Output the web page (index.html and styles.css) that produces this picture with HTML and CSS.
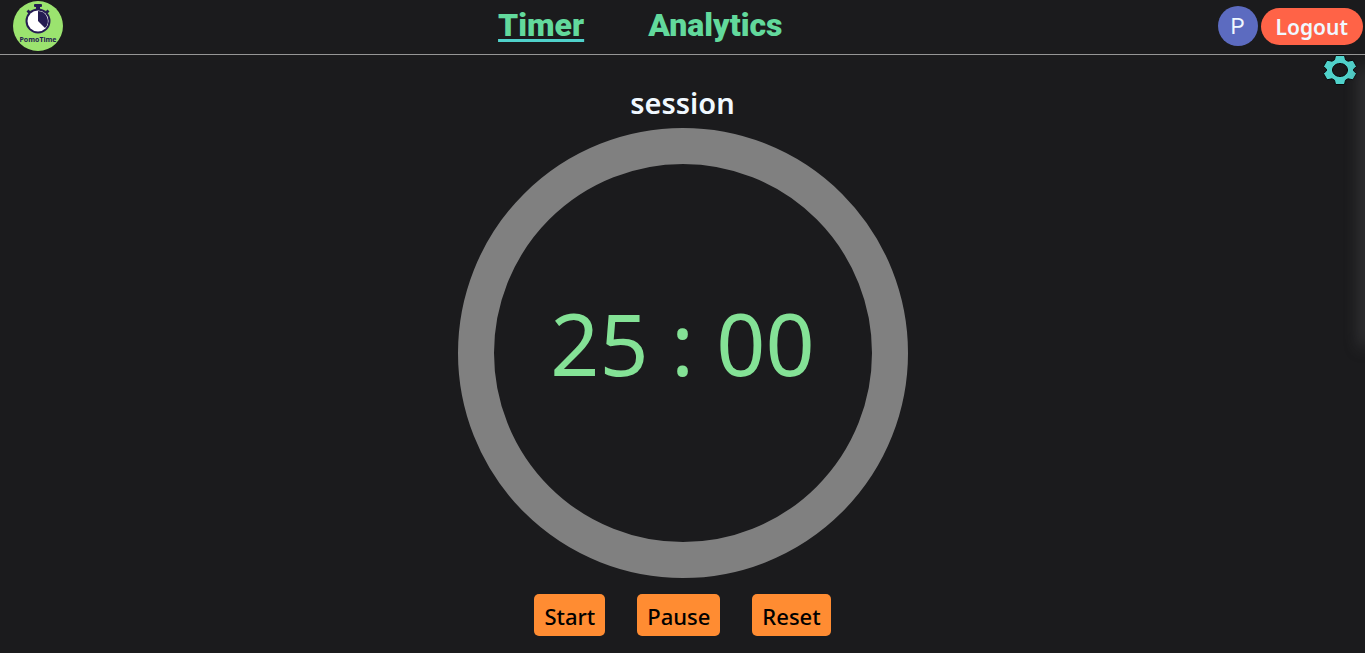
FILE: index.html
```
<!DOCTYPE html>
<html lang="en">
<head>
<meta charset="utf-8">
<meta name="viewport" content="width=device-width, initial-scale=1">
<title>PomoTime</title>
<link rel="stylesheet" href="styles.css">
</head>
<body>
<header class="header">
  <a class="logo" href="#" aria-label="PomoTime home">
    <svg viewBox="0 0 50 50" width="50" height="50">
      <circle cx="25" cy="25" r="25" fill="#9be36f"/>
      <g fill="#251c52">
        <rect x="21" y="3" width="8" height="3" rx="1"/>
        <rect x="23" y="5" width="4" height="4"/>
        <path d="M13.500 10.500l2-2 3 3-2 2zM36.500 10.500l-2-2-3 3 2 2z"/>
        <circle cx="25" cy="20" r="12.500"/>
      </g>
      <circle cx="25" cy="20" r="10.500" fill="#fff"/>
      <path d="M25 20V10A10 10 0 0 1 32 27z" fill="#251c52"/>
      <text class="logo-text" x="25" y="41" text-anchor="middle">PomoTime</text>
    </svg>
  </a>
  <nav class="nav">
    <a class="nav-link active" href="#">Timer</a>
    <a class="nav-link" href="#">Analytics</a>
  </nav>
  <div class="account">
    <span class="avatar">P</span>
    <button class="logout" type="button">Logout</button>
  </div>
</header>
<main class="main">
  <button class="settings" type="button" aria-label="Settings">
    <svg viewBox="0 0 34 32" width="34" height="32">
      <path fill="#50d2cb" stroke="#08090a" stroke-width="1" fill-rule="evenodd" stroke-linejoin="round" d="M12.500 .500h9l1 4.300 2.500 1.400 5-1 3.500 6.300-3 2.700v1.600l3 2.700-3.500 6.300-5-1-2.500 1.400-1 4.300h-9l-1-4.300L9 23.800l-5 1L.500 18.500l3-2.700v-1.600l-3-2.700L4 5.200l5 1 2.500-1.400zM17 8.500c-4.300 0-7.500 2.900-7.500 6.500s3.200 6.500 7.500 6.500 7.500-2.900 7.500-6.500-3.200-6.500-7.500-6.500z"/>
    </svg>
  </button>
  <div class="edge-glow"></div>
  <h1 class="mode">session</h1>
  <div class="ring"><time class="time">25 : 00</time></div>
  <div class="controls">
    <button class="control" type="button">Start</button>
    <button class="control" type="button">Pause</button>
    <button class="control" type="button">Reset</button>
  </div>
</main>
</body>
</html>
```
FILE: styles.css
```
* {
  box-sizing: border-box;
}

body {
  margin: 0;
  min-height: 100vh;
  background: #1b1b1d;
  color: #f0f8ff;
  font-family: "Noto Sans", "Open Sans", sans-serif;
  overflow-x: hidden;
}

button {
  border: 0;
  font-family: inherit;
  cursor: pointer;
}

.header {
  display: flex;
  align-items: center;
  justify-content: space-between;
  height: 55px;
  padding: 0 2px 2px 13px;
  border-bottom: 1px solid #969696;
}

.logo,
.logo svg {
  display: block;
  width: 50px;
  height: 50px;
}

.logo-text {
  font: 700 7px "Noto Sans", sans-serif;
  fill: #251c52;
}

.nav {
  display: flex;
  gap: 64px;
  padding-bottom: 2px;
}

.nav-link {
  color: #62d99c;
  font: 900 32px/38px Roboto, sans-serif;
  text-decoration: none;
}

.nav-link.active {
  text-decoration: underline 3px #50d2cb;
  text-underline-offset: 3px;
}

.account {
  display: flex;
  align-items: center;
  gap: 3px;
}

.avatar {
  width: 40px;
  height: 40px;
  border-radius: 50%;
  background: #5c6bc0;
  font: 400 22px/42px Roboto, sans-serif;
  text-align: center;
}

.logout {
  height: 37px;
  padding: 2px 15px 0;
  border-radius: 19px;
  background: #ff6347;
  color: #f0f8ff;
  font-size: 21px;
  font-weight: 600;
}

.main {
  position: relative;
  display: flex;
  flex-direction: column;
  align-items: center;
  padding: 25px 0 17px;
}

.settings {
  position: absolute;
  top: 0;
  right: 8px;
  padding: 0;
  background: none;
}

.settings svg {
  display: block;
}

.edge-glow {
  position: absolute;
  top: 16px;
  right: 0;
  width: 0;
  height: 272px;
  box-shadow: 0 0 16px 3px #505052;
}

.mode {
  margin: 0 0 2px;
  font-size: 29px;
  font-weight: 600;
  line-height: 46px;
}

.ring {
  display: flex;
  align-items: center;
  justify-content: center;
  width: 450px;
  aspect-ratio: 1;
  padding-bottom: 22px;
  border: 36px solid #808080;
  border-radius: 50%;
}

.time {
  color: #84e296;
  font-size: 86px;
  white-space: nowrap;
}

.controls {
  display: flex;
  gap: 32px;
  margin-top: 16px;
}

.control {
  height: 42px;
  padding: 2px 10px 0;
  border-radius: 5px;
  background: #ff8c32;
  color: #000;
  font-size: 22px;
  font-weight: 500;
}
```
